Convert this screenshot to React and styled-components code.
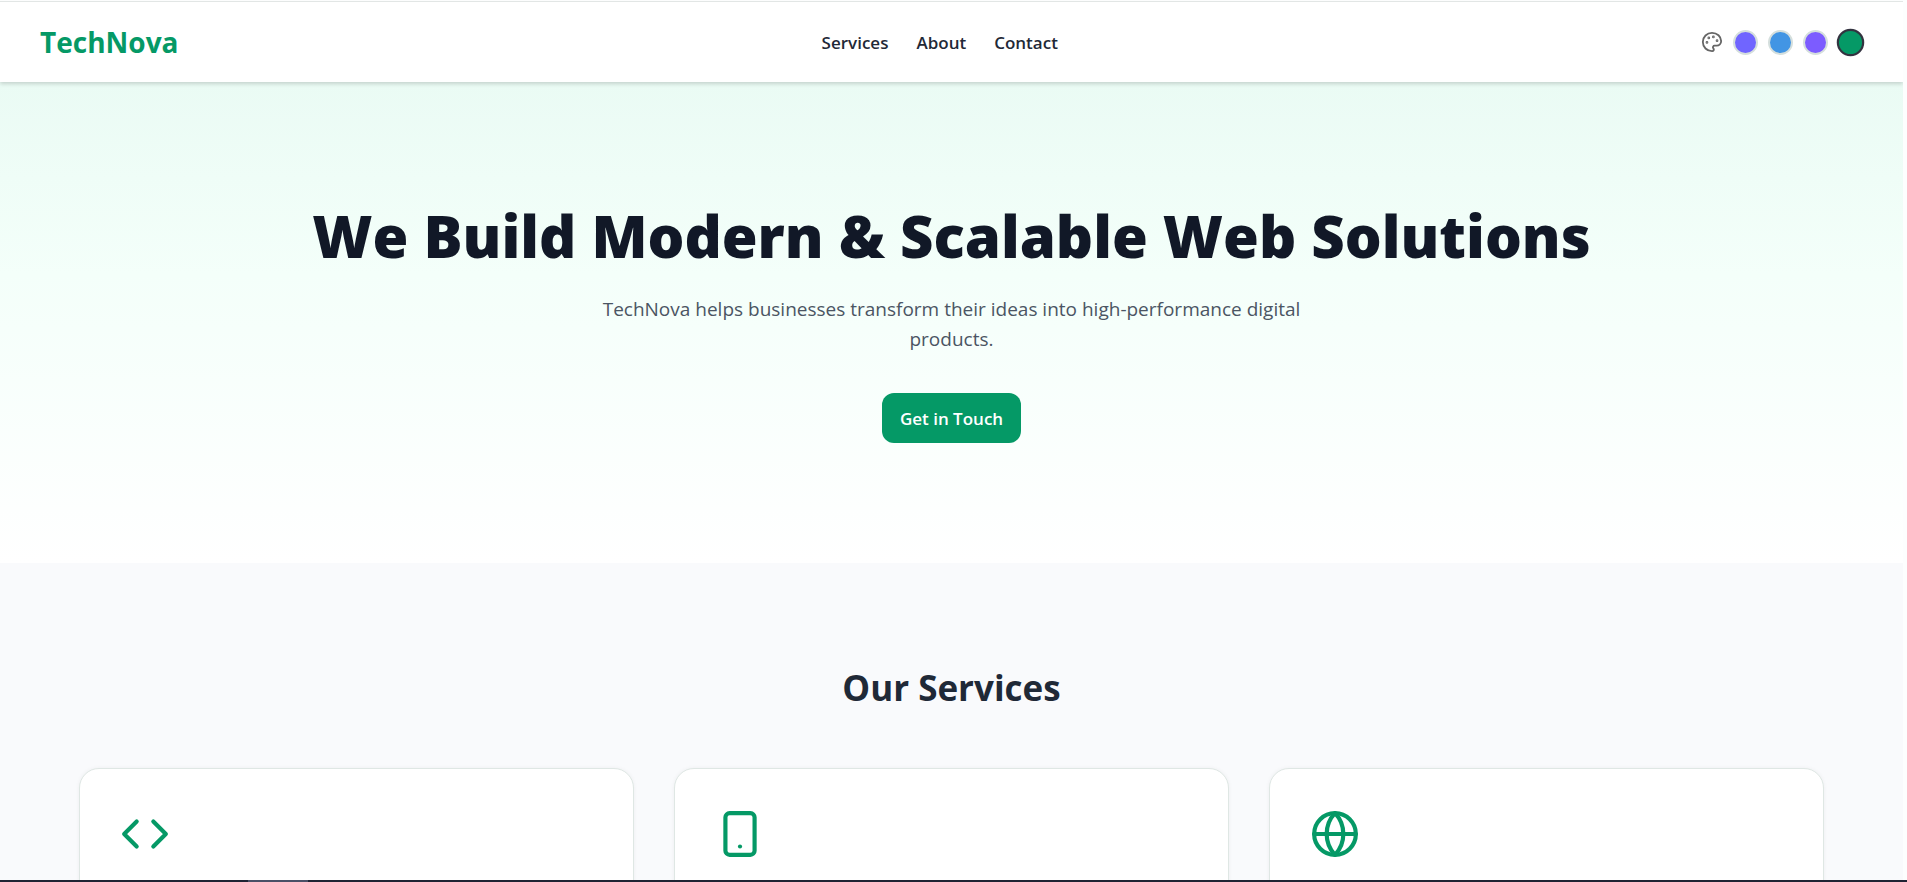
import React, { useState } from "react";
import styled, { createGlobalStyle } from "styled-components";
import { Code, Globe, Palette, Smartphone } from "lucide-react";

const themes = [
  { name: "Indigo", color: "#7065ff" },
  { name: "Blue", color: "#4295e4" },
  { name: "Violet", color: "#7c5cff" },
  { name: "Green", color: "#059966" },
];

const services = [
  { name: "Web Development", icon: Code },
  { name: "Mobile Apps", icon: Smartphone },
  { name: "Global Solutions", icon: Globe },
];

const Navbar = ({ active, onSelect }) => (
  <Header>
    <Logo>TechNova</Logo>
    <Nav>
      <NavLink href="#services">Services</NavLink>
      <NavLink href="#about">About</NavLink>
      <NavLink href="#contact">Contact</NavLink>
    </Nav>
    <ThemePicker>
      <Palette size={22} color="#666666" />
      {themes.map((t) => (
        <Swatch
          key={t.name}
          type="button"
          aria-label={t.name}
          $color={t.color}
          $active={t.name === active}
          onClick={() => onSelect(t.name)}
        />
      ))}
    </ThemePicker>
  </Header>
);

const App = () => {
  const [active, setActive] = useState("Green");
  const { color } = themes.find((t) => t.name === active);

  return (
    <Screen>
      <GlobalStyle />
      <Viewport $primary={color}>
        <Navbar active={active} onSelect={setActive} />
        <Hero>
          <HeroTitle>We Build Modern &amp; Scalable Web Solutions</HeroTitle>
          <HeroText>
            TechNova helps businesses transform their ideas into
            high-performance digital products.
          </HeroText>
          <HeroButton type="button">Get in Touch</HeroButton>
        </Hero>
        <Services id="services">
          <SectionTitle>Our Services</SectionTitle>
          <Grid>
            {services.map(({ name, icon: Icon }) => (
              <Card key={name} aria-label={name}>
                <Icon size={50} />
              </Card>
            ))}
          </Grid>
        </Services>
      </Viewport>
      <Taskbar>
        <TaskbarItem />
      </Taskbar>
    </Screen>
  );
};

export default App;

const GlobalStyle = createGlobalStyle`
  * {
    box-sizing: border-box;
  }

  body {
    margin: 0;
    font-family: "Open Sans", "Noto Sans", sans-serif;
    color: #1f2937;
    background: #fdfefe;
  }
`;

const Screen = styled.div`
  display: flex;
  flex-direction: column;
  height: 100vh;
  overflow: hidden;
`;

const Viewport = styled.main`
  --primary: ${(props) => props.$primary};
  flex: 1;
  min-height: 0;
  margin-right: 4px;
  padding-top: 2px;
  overflow: hidden;
`;

const Taskbar = styled.footer`
  display: flex;
  height: 2px;
  padding-left: 13%;
  background: #1f2333;
`;

const TaskbarItem = styled.div`
  width: 60px;
  background: #4a4f66;
`;

const Header = styled.header`
  position: relative;
  display: flex;
  align-items: center;
  justify-content: space-between;
  height: 80px;
  padding: 0 40px;
  background: #ffffff;
  box-shadow: 0 -1px 0 #e2e6e5, 0 2px 4px rgba(0, 0, 0, 0.16);
`;

const Logo = styled.div`
  font-size: 28px;
  font-weight: 700;
  color: var(--primary);
`;

const Nav = styled.nav`
  display: flex;
  gap: 28px;
`;

const NavLink = styled.a`
  font-size: 17px;
  font-weight: 600;
  color: #1f2937;
  text-decoration: none;
`;

const ThemePicker = styled.div`
  display: flex;
  align-items: center;
  gap: 10px;
`;

const Swatch = styled.button`
  width: 25px;
  height: 25px;
  padding: 0;
  border: 2px solid ${(props) => (props.$active ? "#333340" : "#d5dfdd")};
  border-radius: 50%;
  background: ${(props) => props.$color};
  transform: ${(props) => (props.$active ? "scale(1.1)" : "none")};
  cursor: pointer;
`;

const Hero = styled.section`
  display: flex;
  flex-direction: column;
  align-items: center;
  padding: 120px 20px;
  text-align: center;
  background: linear-gradient(to bottom, #eafbf4, #f4fffa 40%, #ffffff);
`;

const HeroTitle = styled.h1`
  margin: 0 0 24px;
  font-size: 58px;
  line-height: 68px;
  font-weight: 800;
  color: #111827;
`;

const HeroText = styled.p`
  max-width: 720px;
  margin: 0 0 39px;
  font-size: 19px;
  line-height: 30px;
  color: #4b5563;
`;

const HeroButton = styled.button`
  height: 50px;
  padding: 0 18px;
  border: none;
  border-radius: 12px;
  font-family: inherit;
  font-size: 17px;
  font-weight: 600;
  color: #ffffff;
  background: var(--primary);
  cursor: pointer;
`;

const Services = styled.section`
  padding: 99px 79px;
  background: #f9fafc;
`;

const SectionTitle = styled.h2`
  margin: 0 0 54px;
  font-size: 35px;
  line-height: 52px;
  font-weight: 700;
  text-align: center;
`;

const Grid = styled.div`
  display: grid;
  grid-template-columns: repeat(3, 1fr);
  gap: 40px;
`;

const Card = styled.article`
  min-height: 280px;
  padding: 40px;
  border: 1px solid #dfe7e4;
  border-radius: 20px;
  color: var(--primary);
  background: #ffffff;
  box-shadow: 0 0 4px rgba(0, 40, 20, 0.05);
`;
